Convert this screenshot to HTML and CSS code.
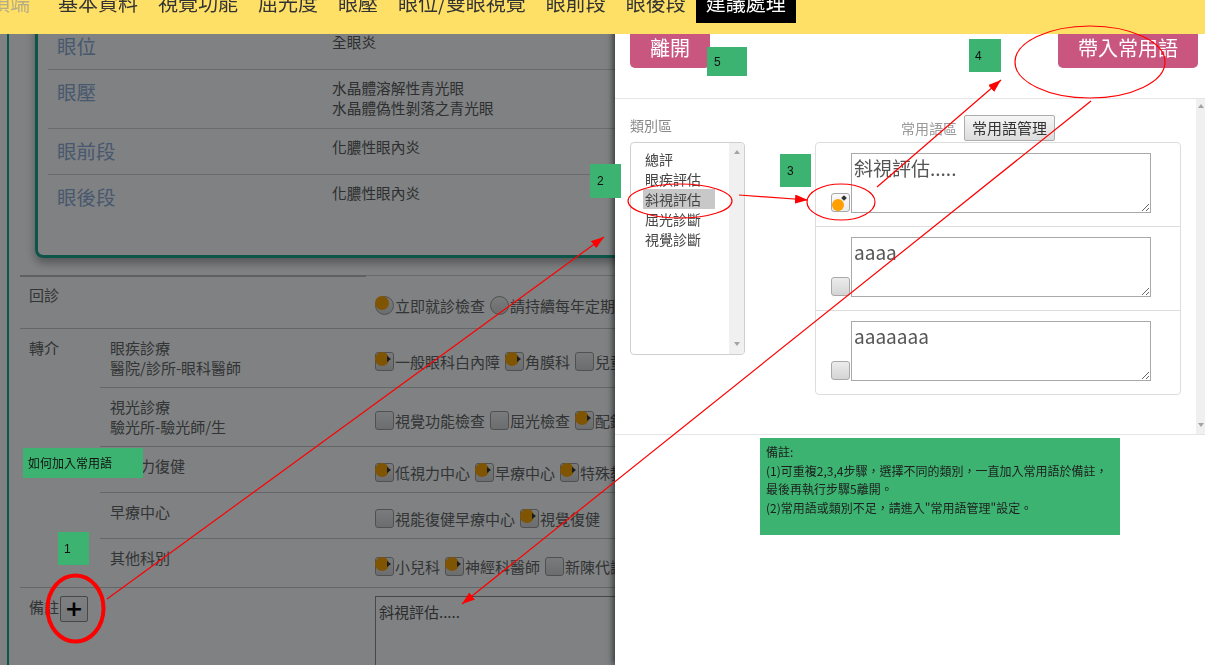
FILE: index.html
```html
<!DOCTYPE html>
<html lang="zh-Hant">
<head>
<meta charset="utf-8">
<title>建議處理</title>
<link rel="stylesheet" href="styles.css">
</head>
<body>
<nav class="topnav">
  <a class="nav-item nav-top">頂端</a>
  <a class="nav-item">基本資料</a>
  <a class="nav-item">視覺功能</a>
  <a class="nav-item">屈光度</a>
  <a class="nav-item">眼壓</a>
  <a class="nav-item">眼位/雙眼視覺</a>
  <a class="nav-item">眼前段</a>
  <a class="nav-item">眼後段</a>
  <a class="nav-item active">建議處理</a>
</nav>

<main class="page">
  <div class="frame">
    <section class="card">
      <div class="crow"><div class="clabel">眼位</div><div class="cval">全眼炎</div></div>
      <div class="crow"><div class="clabel">眼壓</div><div class="cval">水晶體溶解性青光眼<br>水晶體偽性剝落之青光眼</div></div>
      <div class="crow"><div class="clabel">眼前段</div><div class="cval">化膿性眼內炎</div></div>
      <div class="crow"><div class="clabel">眼後段</div><div class="cval">化膿性眼內炎</div></div>
    </section>

    <div class="form">
      <div class="frow">
        <div class="fhead">回診</div>
        <div class="fbody">
          <div class="fsub fsub-return">
            <div class="fsub-label"></div>
            <div class="fopts">
              <span class="opt"><span class="cb rd on"></span>立即就診檢查</span>
              <span class="opt"><span class="cb rd"></span>請持續每年定期檢查</span>
            </div>
          </div>
        </div>
      </div>

      <div class="frow">
        <div class="fhead">轉介</div>
        <div class="fbody">
          <div class="fsub">
            <div class="fsub-label">眼疾診療<br>醫院/診所-眼科醫師</div>
            <div class="fopts">
              <span class="opt"><span class="cb on"></span>一般眼科白內障</span>
              <span class="opt"><span class="cb on"></span>角膜科</span>
              <span class="opt"><span class="cb"></span>兒童眼科</span>
            </div>
          </div>
          <div class="fsub">
            <div class="fsub-label">視光診療<br>驗光所-驗光師/生</div>
            <div class="fopts">
              <span class="opt"><span class="cb"></span>視覺功能檢查</span>
              <span class="opt"><span class="cb"></span>屈光檢查</span>
              <span class="opt"><span class="cb on"></span>配鏡</span>
            </div>
          </div>
          <div class="fsub">
            <div class="fsub-label">低視力復健</div>
            <div class="fopts">
              <span class="opt"><span class="cb on"></span>低視力中心</span>
              <span class="opt"><span class="cb on"></span>早療中心</span>
              <span class="opt"><span class="cb on"></span>特殊教育</span>
            </div>
          </div>
          <div class="fsub">
            <div class="fsub-label">早療中心</div>
            <div class="fopts">
              <span class="opt"><span class="cb"></span>視能復健早療中心</span>
              <span class="opt"><span class="cb on"></span>視覺復健</span>
            </div>
          </div>
          <div class="fsub fsub-other">
            <div class="fsub-label">其他科別</div>
            <div class="fopts">
              <span class="opt"><span class="cb on"></span>小兒科</span>
              <span class="opt"><span class="cb on"></span>神經科醫師</span>
              <span class="opt"><span class="cb"></span>新陳代謝科</span>
            </div>
          </div>
        </div>
      </div>

      <div class="frow frow-note">
        <div class="fhead fhead-note">備註<button class="plus" type="button">+</button></div>
        <div class="fbody">
          <div class="fsub">
            <div class="fsub-label"></div>
            <textarea class="note-ta">斜視評估.....</textarea>
          </div>
        </div>
      </div>
    </div>
  </div>
</main>

<div class="backdrop"></div>

<aside class="modal">
  <header class="mhead">
    <button class="pbtn" type="button">離開</button>
    <button class="pbtn" type="button">帶入常用語</button>
  </header>
  <div class="mbody">
    <div class="mcontent">
      <div class="catcol">
        <div class="mlabel">類別區</div>
        <div class="listbox">
          <ul class="cats">
            <li>總評</li>
            <li>眼疾評估</li>
            <li class="sel">斜視評估</li>
            <li>屈光診斷</li>
            <li>視覺診斷</li>
          </ul>
          <div class="vscroll vscroll-list"><span class="arr arr-up"></span><span class="arr arr-down"></span></div>
        </div>
      </div>
      <div class="phrasecol">
        <div class="phead"><span class="mlabel">常用語區</span><button class="gbtn" type="button">常用語管理</button></div>
        <div class="panel">
          <div class="prow"><span class="mcb on"></span><textarea class="pta">斜視評估.....</textarea></div>
          <div class="prow"><span class="mcb"></span><textarea class="pta">aaaa</textarea></div>
          <div class="prow"><span class="mcb"></span><textarea class="pta">aaaaaaa</textarea></div>
        </div>
      </div>
    </div>
    <div class="vscroll vscroll-main"><span class="arr arr-up"></span><span class="arr arr-down"></span></div>
  </div>
  <footer class="mfoot">
    <div class="tip">備註:<br>(1)可重複2,3,4步驟，選擇不同的類別，一直加入常用語於備註，<br>最後再執行步驟5離開。<br>(2)常用語或類別不足，請進入"常用語管理"設定。</div>
  </footer>
</aside>

<div class="annot">
  <div class="tag tag-how">如何加入常用語</div>
  <div class="tag tag-1">1</div>
  <div class="tag tag-2">2</div>
  <div class="tag tag-3">3</div>
  <div class="tag tag-4">4</div>
  <div class="tag tag-5">5</div>
  <svg class="marks" width="1205" height="665" viewBox="0 0 1205 665">
    <defs>
      <marker id="ah" markerUnits="userSpaceOnUse" markerWidth="13" markerHeight="9" refX="13" refY="4.5" orient="auto" viewBox="0 0 13 9">
        <path d="M0 0L13 4.5L0 9z" fill="#ff0000" stroke="none"/>
      </marker>
    </defs>
    <g stroke="#ff0000" stroke-width="1.2" fill="none">
      <line x1="107" y1="599" x2="604" y2="237" marker-end="url(#ah)"/>
      <line x1="739" y1="195" x2="808" y2="200" marker-end="url(#ah)"/>
      <line x1="877" y1="187" x2="1001" y2="80" marker-end="url(#ah)"/>
      <line x1="1091" y1="101" x2="462" y2="604" marker-end="url(#ah)"/>
      <ellipse cx="1090" cy="62" rx="75" ry="36"/>
      <ellipse cx="680" cy="201" rx="52" ry="17"/>
      <ellipse cx="841" cy="202" rx="34" ry="18"/>
      <ellipse cx="75.5" cy="608.5" rx="28" ry="33" stroke-width="4"/>
    </g>
  </svg>
</div>
</body>
</html>
```

FILE: styles.css
```css
* { box-sizing: border-box; }
html, body { margin: 0; padding: 0; }
body {
  width: 1205px;
  height: 665px;
  overflow: hidden;
  position: relative;
  background: #fff;
  font-family: "Noto Sans CJK TC", "Noto Sans", sans-serif;
  color: #333;
}

/* ---------- top nav ---------- */
.topnav {
  position: fixed;
  top: 0; left: 0; right: 0;
  height: 34px;
  background: #ffe066;
  z-index: 30;
  display: flex;
  align-items: flex-start;
  overflow: hidden;
}
.nav-item {
  display: block;
  font-size: 20px;
  line-height: 28px;
  padding: 0 10px 6px;
  margin-top: -11px;
  color: #333;
  white-space: nowrap;
}
.nav-top { margin-left: -20px; margin-right: 8px; color: #b5ab86; }
.nav-item.active { background: #000; color: #fff; }

/* ---------- background page ---------- */
.page { width: 1205px; height: 665px; overflow: hidden; }
.frame {
  margin-left: 7px;
  border-left: 2px solid #18a68a;
  height: 665px;
  padding-top: 14px;
}
.card {
  margin-left: 26px;
  border: 3px solid #18a68a;
  border-radius: 8px;
  padding: 7px 0 35px 10px;
  box-shadow: 0 5px 10px rgba(0,0,0,.35);
}
.crow {
  display: flex;
  padding: 8px 0 10px 9px;
  border-bottom: 1px solid #d2d4d6;
}
.crow:last-child { border-bottom: none; }
.clabel {
  width: 275px;
  flex: none;
  font-size: 19.5px;
  line-height: 27px;
  color: #90acd6;
}
.cval { font-size: 14.7px; line-height: 20px; color: #5a5a5a; }

.form {
  margin: 17px 0 0 11px;
  border-top: 1px solid #d0d0d0;
  position: relative;
}
.form::before {
  content: "";
  position: absolute;
  left: 0; top: -1px;
  width: 346px; height: 2px;
  background: #bcbcbc;
}
.frow { display: flex; border-bottom: 1px solid #c8c8c8; }
.fhead {
  width: 80px;
  flex: none;
  padding: 9px 0 0 9px;
  font-size: 15px;
  line-height: 20px;
  color: #646464;
}
.fhead-note { display: flex; align-items: flex-start; }
.fbody { flex: 1; }
.fsub { display: flex; border-bottom: 1px solid #c8c8c8; padding-bottom: 9px; }
.fsub:last-child { border-bottom: none; }
.fsub-return { min-height: 52px; }
.fsub-other { min-height: 48px; }
.fsub-label {
  width: 275px;
  flex: none;
  padding: 9px 0 0 10px;
  font-size: 15px;
  line-height: 20px;
  color: #646464;
}
.fopts {
  padding-top: 15px;
  display: flex;
  white-space: nowrap;
  font-size: 15px;
  line-height: 21px;
  color: #646464;
}
.opt { display: flex; align-items: center; margin-right: 5px; }
.cb {
  width: 19px; height: 19px;
  flex: none;
  position: relative;
  margin-right: 1px;
  border: 1px solid #9c9c9c;
  border-radius: 3px;
  background: linear-gradient(#f2f2f2, #d6d6d6);
}
.cb.rd { border-radius: 50%; }
.cb.on::before {
  content: "";
  position: absolute;
  left: -1px; top: -1px;
  width: 14px; height: 14px;
  border-radius: 50%;
  background: #ffa500;
}
.cb.on::after {
  content: "";
  position: absolute;
  right: 2px; top: 3px;
  border-left: 4px solid #333;
  border-top: 3px solid transparent;
  border-bottom: 3px solid transparent;
}
.cb.rd.on::after { display: none; }

.plus {
  width: 28px; height: 26px;
  margin: -1px 0 0 1px;
  padding: 0;
  border: 1px solid #8a8a8a;
  border-radius: 2px;
  background: linear-gradient(#fafafa, #ececec);
  font: bold 22px/22px "DejaVu Sans", sans-serif;
  color: #000;
}
.note-ta {
  margin-top: 8px;
  width: 420px;
  height: 110px;
  padding: 4px 3px;
  border: 1px solid #8c8c8c;
  background: #fff;
  font: 15px/21px "Noto Sans CJK TC", sans-serif;
  color: #555;
  resize: none;
}

/* ---------- backdrop ---------- */
.backdrop {
  position: fixed;
  inset: 0;
  background: rgba(0,4,6,.5);
  z-index: 10;
}

/* ---------- modal ---------- */
.modal {
  position: fixed;
  left: 615px; top: 0;
  width: 590px; height: 665px;
  background: #fff;
  z-index: 20;
  box-shadow: -2px 0 6px rgba(0,0,0,.6);
}
.mhead {
  display: flex;
  justify-content: space-between;
  align-items: flex-start;
  padding: 28px 7px 30px 15px;
  border-bottom: 1px solid #e5e5e5;
}
.pbtn {
  height: 40px;
  padding: 0 20px;
  border: none;
  border-radius: 5px;
  background: #c9567f;
  color: #fff;
  font: 20px/40px "Noto Sans CJK TC", sans-serif;
}
.mbody {
  display: flex;
  height: 336px;
  border-bottom: 1px solid #e5e5e5;
}
.mcontent { flex: 1; display: flex; padding: 16px 0 0 15px; }
.mlabel { font-size: 14px; line-height: 20px; color: #888; }
.catcol { width: 115px; flex: none; }
.catcol .mlabel { margin-bottom: 7px; }
.listbox {
  height: 213px;
  border: 1px solid #cfcfcf;
  border-radius: 4px;
  display: flex;
  overflow: hidden;
}
.cats { flex: 1; list-style: none; margin: 0; padding: 6px 0 0 12px; }
.cats li {
  width: 72px;
  padding-left: 2px;
  font-size: 14px;
  line-height: 20px;
  color: #444;
}
.cats li.sel { background: #c8c8c8; }

.vscroll {
  background: #f0f0f0;
  display: flex;
  flex-direction: column;
  justify-content: space-between;
  align-items: center;
}
.vscroll-list { width: 15px; padding: 7px 0 8px; }
.vscroll-main { width: 9px; padding: 5px 0 7px; }
.arr { width: 0; height: 0; border-left: 3.5px solid transparent; border-right: 3.5px solid transparent; }
.arr-up { border-bottom: 4px solid #a3a3a3; }
.arr-down { border-top: 4px solid #a3a3a3; }

.phrasecol { width: 366px; margin-left: 70px; flex: none; }
.phead {
  display: flex;
  justify-content: flex-end;
  align-items: center;
  gap: 7px;
  height: 26px;
  padding-right: 126px;
  margin-bottom: 1px;
}
.phead .mlabel { color: #999; }
.gbtn {
  height: 26px;
  padding: 0 7px;
  border: 1px solid #adadad;
  border-radius: 2px;
  background: linear-gradient(#f6f6f6, #dcdcdc);
  font: 15px/24px "Noto Sans CJK TC", sans-serif;
  color: #333;
}
.panel { border: 1px solid #ddd; border-radius: 4px; }
.prow {
  display: flex;
  align-items: flex-end;
  padding: 10px 0 13px 15px;
  border-bottom: 1px solid #ddd;
}
.prow:last-child { border-bottom: none; }
.mcb {
  width: 19px; height: 19px;
  flex: none;
  position: relative;
  margin: 0 1px 1px 0;
  border: 1px solid #a8a8a8;
  border-radius: 3px;
  background: linear-gradient(#ececec, #d4d4d4);
}
.mcb.on { background: linear-gradient(#fafafa, #ececec); }
.mcb.on::before {
  content: "";
  position: absolute;
  left: 0; bottom: 0;
  width: 12px; height: 12px;
  border-radius: 50%;
  background: #ffa000;
}
.mcb.on::after {
  content: "";
  position: absolute;
  right: 3px; top: 2px;
  width: 4px; height: 4px;
  background: #333;
  transform: rotate(45deg);
}
.pta {
  width: 300px;
  height: 60px;
  padding: 1px 2px;
  border: 1px solid #a9a9a9;
  font: 19px/26px "Noto Sans CJK TC", sans-serif;
  color: #555;
  background: #fff;
}

.mfoot { padding: 3px 0 0 145px; }
.tip {
  width: 360px;
  height: 97px;
  background: #3cb371;
  padding: 5px 6px;
  font-size: 12px;
  line-height: 18.6px;
  color: #1e1e1e;
}

/* ---------- annotations ---------- */
.annot {
  position: absolute;
  left: 0; top: 0;
  width: 1205px; height: 665px;
  z-index: 40;
  pointer-events: none;
}
.marks { position: absolute; left: 0; top: 0; }
.tag {
  position: absolute;
  display: flex;
  align-items: center;
  padding-left: 6px;
  background: #3cb371;
  font: 12px/1 "Liberation Sans", "Noto Sans CJK TC", sans-serif;
  color: #111;
}
.tag-how { left: 23px; top: 448px; width: 120px; height: 30px; padding-left: 5px; font-family: "Noto Sans CJK TC", sans-serif; }
.tag-1 { left: 58px; top: 532px; width: 31px; height: 33px; }
.tag-2 { left: 590px; top: 164px; width: 31px; height: 34px; padding-left: 7px; }
.tag-3 { left: 780px; top: 154px; width: 31px; height: 33px; padding-left: 7px; }
.tag-4 { left: 969px; top: 39px; width: 32px; height: 33px; padding-left: 6px; }
.tag-5 { left: 707px; top: 47px; width: 40px; height: 29px; padding-left: 7px; }
```
